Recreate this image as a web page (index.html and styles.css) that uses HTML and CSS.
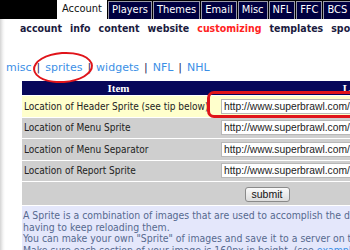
FILE: index.html
```html
<!DOCTYPE html>
<html>
<head>
<meta charset="utf-8">
<link rel="stylesheet" href="styles.css">
</head>
<body>
<div class="topbar">
  <span class="tab active">Account</span>
  <span class="tab">Players</span>
  <span class="tab">Themes</span>
  <span class="tab">Email</span>
  <span class="tab">Misc</span>
  <span class="tab">NFL</span>
  <span class="tab">FFC</span>
  <span class="tab">BCS</span>
</div>
<div class="page">
  <div class="subnav">
    <span>account</span><span>info</span><span>content</span><span>website</span><span class="current">customizing</span><span>templates</span><span>sports</span>
  </div>
  <div class="links">
    <a class="lnk">misc</a><span class="sep">|</span><a class="lnk">sprites</a><span class="sep">|</span><a class="lnk">widgets</a><span class="sep">|</span><a class="lnk">NFL</a><span class="sep">|</span><a class="lnk">NHL</a>
  </div>
  <table class="grid">
    <tr class="head"><th class="c1">Item</th><th class="c2">Location</th></tr>
    <tr class="hl"><td class="c1">Location of Header Sprite (see tip below)</td><td class="c2"><span class="field">http://www.superbrawl.com/css/header.png</span></td></tr>
    <tr><td class="c1">Location of Menu Sprite</td><td class="c2"><span class="field">http://www.superbrawl.com/css/menu.png</span></td></tr>
    <tr><td class="c1">Location of Menu Separator</td><td class="c2"><span class="field">http://www.superbrawl.com/css/sep.png</span></td></tr>
    <tr><td class="c1">Location of Report Sprite</td><td class="c2"><span class="field">http://www.superbrawl.com/css/report.png</span></td></tr>
    <tr class="btnrow"><td colspan="2"><button class="submit">submit</button></td></tr>
  </table>
  <div class="tip">
    A Sprite is a combination of images that are used to accomplish the different looks without<br>
    having to keep reloading them.<br>
    You can make your own "Sprite" of images and save it to a server on the web.<br>
    Make sure each section of your image is 160px in height. (see <a class="lnk">example</a>)
  </div>
  <div class="ring"></div>
  <div class="box-mark"></div>
</div>
</body>
</html>
```
FILE: styles.css
```css
html, body {
  margin: 0;
  padding: 0;
}
body {
  width: 350px;
  height: 250px;
  overflow: hidden;
  background: #fff;
  font-family: "DejaVu Sans Condensed", "DejaVu Sans", sans-serif;
  font-stretch: condensed;
}
.topbar {
  height: 19px;
  background: #000;
  display: flex;
  align-items: flex-end;
  padding-left: 57px;
  gap: 1px;
  white-space: nowrap;
}
.tab {
  box-sizing: border-box;
  height: 18px;
  line-height: 16px;
  padding: 0 3px;
  border: 1px solid #9a9aa8;
  border-bottom: none;
  background: #000040;
  color: #fff;
  font-size: 11px;
  flex: none;
}
.tab.active {
  background: #fff;
  color: #111;
  border-color: #fff;
  height: 19px;
  padding: 0 4px;
}
.page {
  position: relative;
  height: 231px;
  background: linear-gradient(to right, #d4d4d4 0px, #f4f4f4 3px, #fff 5px);
}
.subnav {
  height: 19px;
  line-height: 19px;
  padding-left: 20px;
  display: flex;
  gap: 8px;
  font-weight: bold;
  font-size: 10.5px;
  color: #1b1b40;
  white-space: nowrap;
}
.subnav .current {
  color: #f22;
}
.links {
  margin-top: 22px;
  height: 16px;
  line-height: 16px;
  padding-left: 6px;
  font-family: "DejaVu Sans", sans-serif;
  font-stretch: normal;
  font-size: 11px;
  white-space: nowrap;
}
.lnk {
  color: #3b8fe6;
}
.sep {
  color: #2a2a5a;
  margin: 0 5px;
}
.grid {
  margin: 4px 0 0 22px;
  width: 490px;
  border-collapse: separate;
  border-spacing: 0 1px;
  font-size: 10px;
  color: #222;
}
.grid td, .grid th {
  padding: 0;
}
.head th {
  height: 14px;
  background: #07075a;
  color: #fff;
  font-family: "Liberation Serif", serif;
  font-size: 11px;
  font-weight: bold;
  text-align: center;
  line-height: 14px;
}
.grid .c1 {
  width: 191px;
  padding-left: 2px;
  text-align: left;
  white-space: nowrap;
}
.head th.c1 {
  text-align: center;
  padding-left: 0;
}
.grid td {
  height: 20.5px;
  background: #cfcfcf;
}
.grid .hl td {
  background: #ffffcc;
}
.grid td.c2 {
  padding-left: 6px;
}
.field {
  display: block;
  box-sizing: border-box;
  height: 15px;
  line-height: 13px;
  padding-left: 2px;
  background: #fff;
  border: 1px solid #b8b8b8;
  font-family: "Liberation Sans", sans-serif;
  font-size: 10.3px;
  color: #222;
  white-space: nowrap;
  overflow: hidden;
}
.btnrow td {
  height: 21px;
  text-align: center;
  padding-top: 2px;
}
.submit {
  box-sizing: border-box;
  width: 45px;
  height: 15px;
  padding: 0;
  border: 1px solid #8a8a8a;
  border-radius: 3px;
  background: linear-gradient(#fafafa, #dcdcdc);
  font-family: "Liberation Sans", sans-serif;
  font-size: 10.5px;
  color: #111;
  line-height: 13px;
}
.tip {
  margin: 0 0 0 22px;
  width: 500px;
  height: 60px;
  padding: 4px 0 0 1px;
  background: #e4e7fb;
  color: #56698f;
  font-size: 10.4px;
  line-height: 11.7px;
  white-space: nowrap;
}
.ring {
  position: absolute;
  left: 33px;
  top: 33px;
  width: 60px;
  height: 31px;
  box-sizing: border-box;
  border: 2.5px solid #e0141a;
  border-radius: 50%;
  transform: rotate(-4deg);
}
.box-mark {
  position: absolute;
  left: 207px;
  top: 72px;
  width: 170px;
  height: 27px;
  box-sizing: border-box;
  border: 3px solid #e0141a;
  border-radius: 7px;
}
```
